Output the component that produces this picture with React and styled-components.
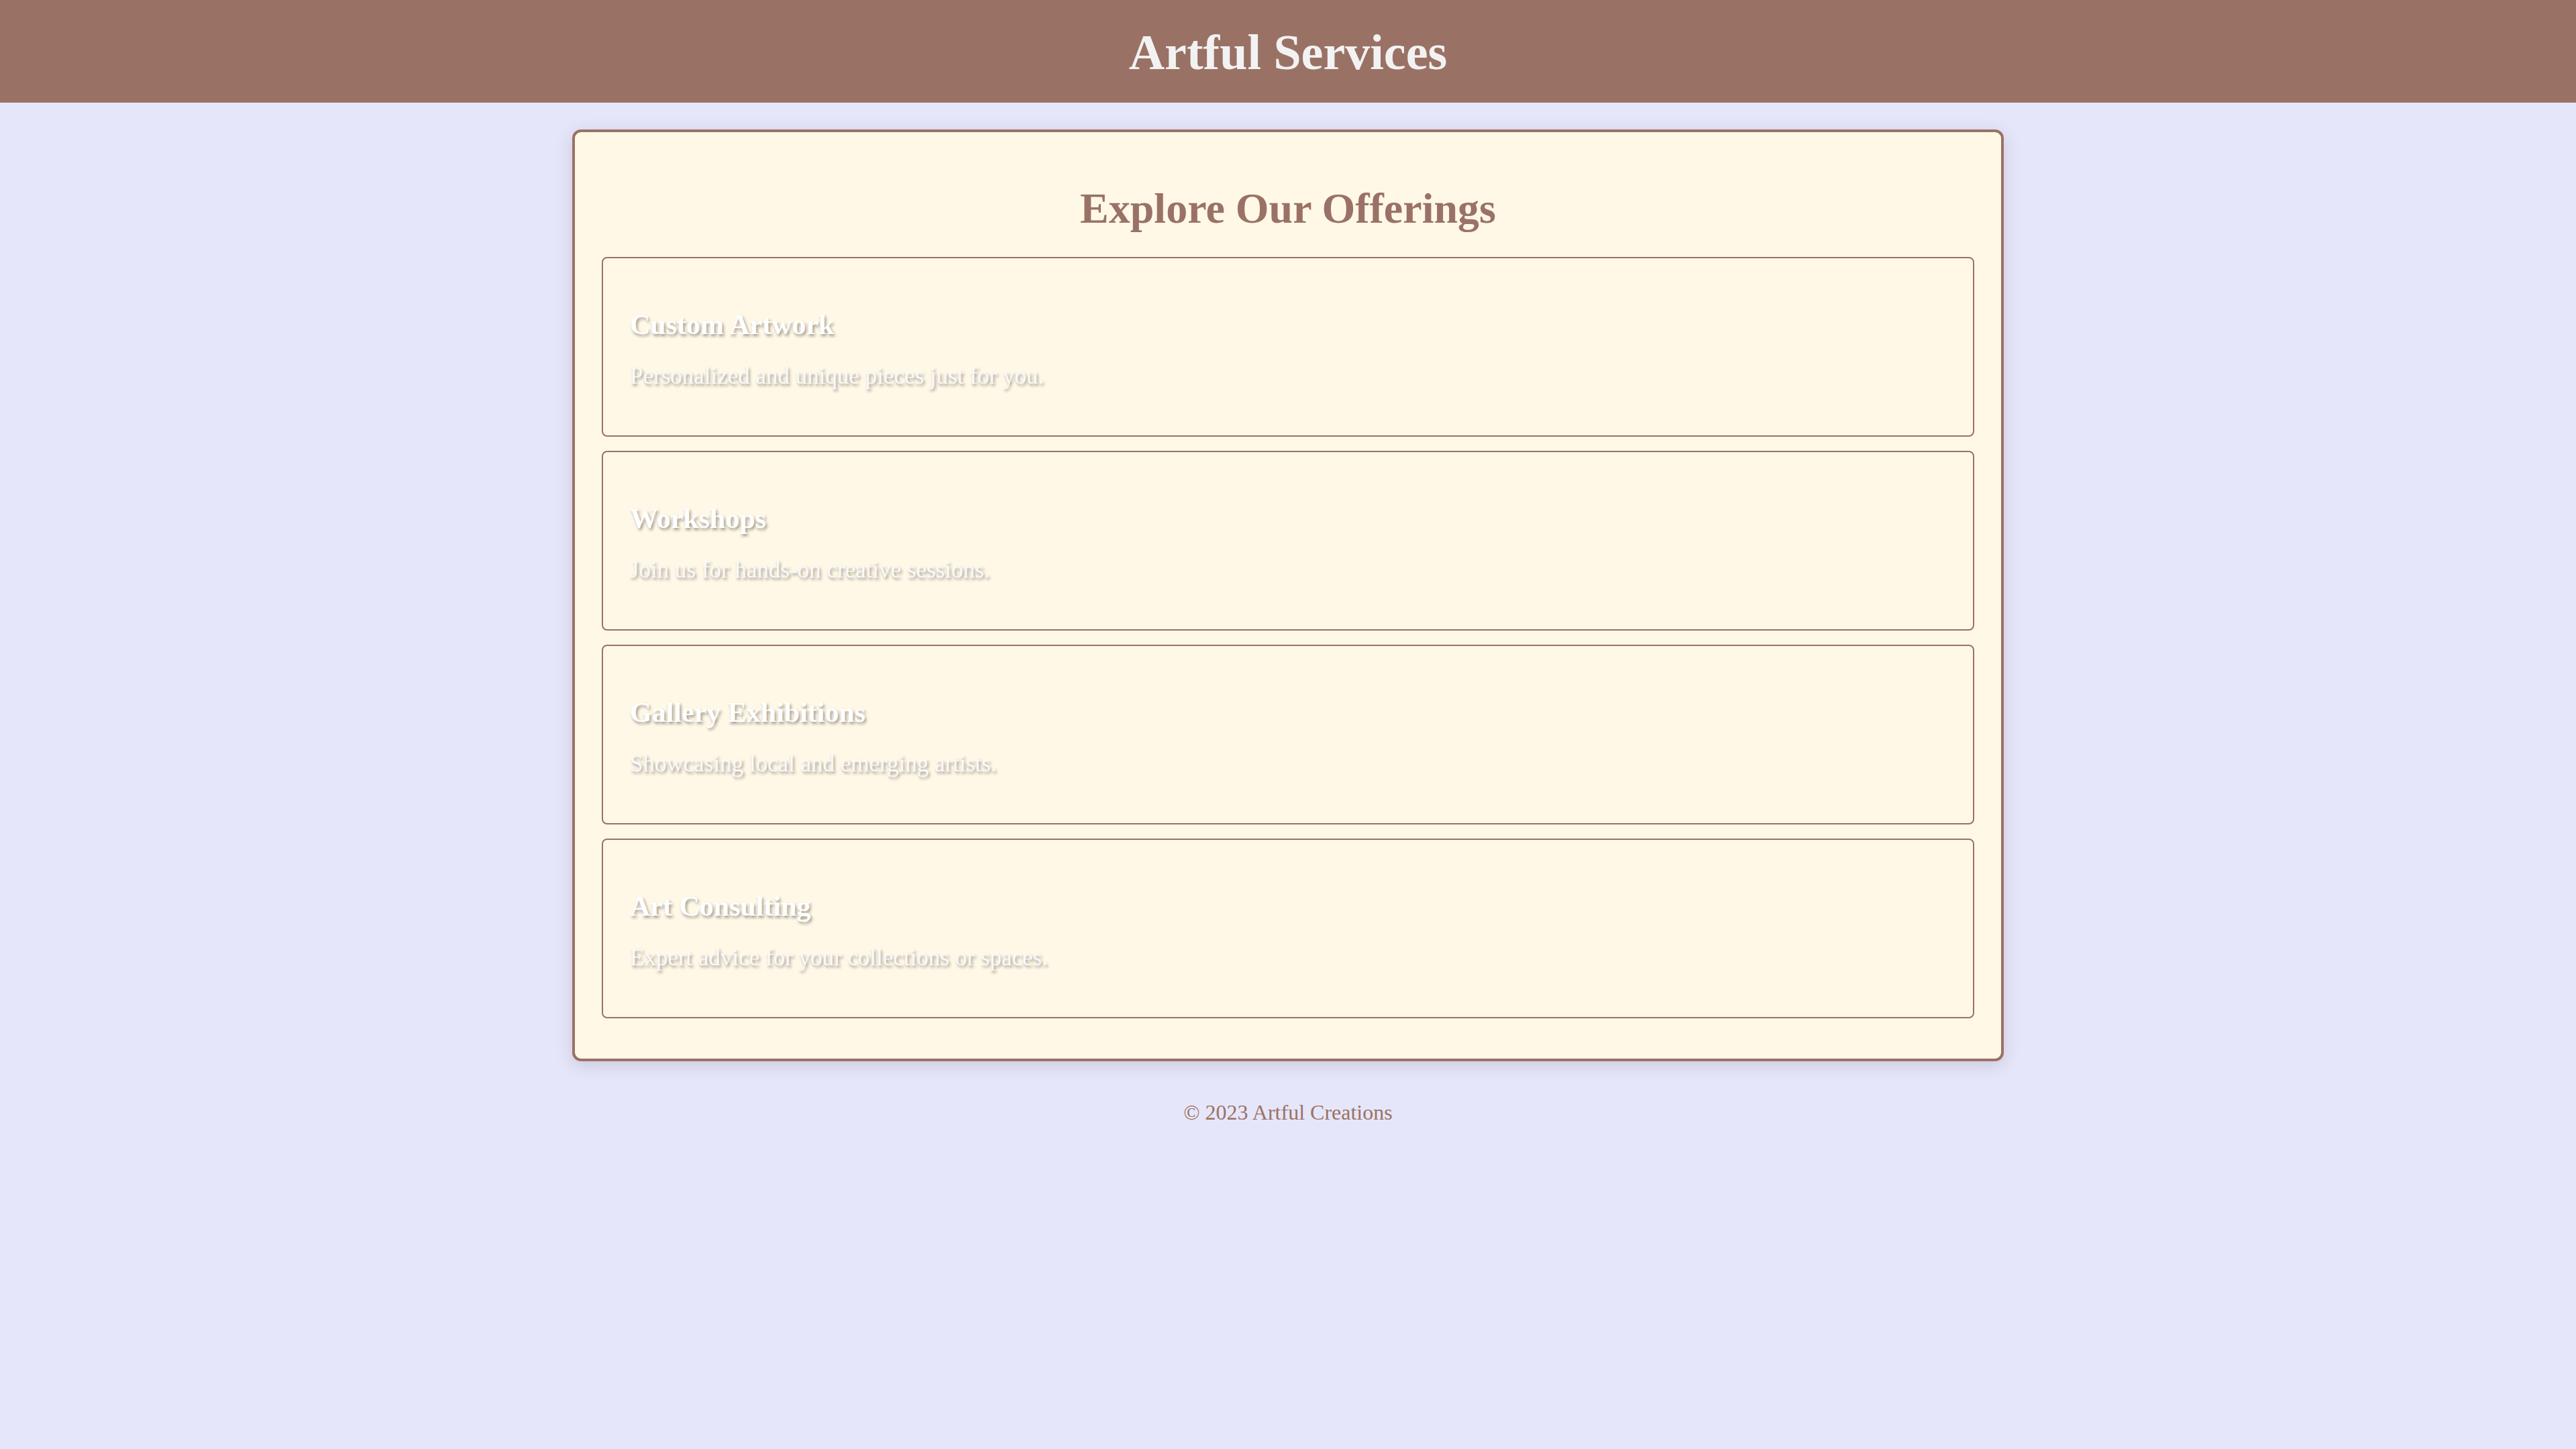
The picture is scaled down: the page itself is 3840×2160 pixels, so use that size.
import React from 'react';
import styled, { createGlobalStyle } from 'styled-components';

const services = [
  { title: 'Custom Artwork', text: 'Personalized and unique pieces just for you.' },
  { title: 'Workshops', text: 'Join us for hands-on creative sessions.' },
  { title: 'Gallery Exhibitions', text: 'Showcasing local and emerging artists.' },
  { title: 'Art Consulting', text: 'Expert advice for your collections or spaces.' },
];

const GlobalStyle = createGlobalStyle`
  html, body {
    margin: 0;
    padding: 0;
    background: #e6e6fa;
    font-family: "Liberation Serif", "DejaVu Serif", serif;
  }
`;

const Page = styled.div`
  min-height: 100vh;
  display: flex;
  flex-direction: column;
  align-items: center;
`;

const Header = styled.header`
  width: 100%;
  height: 153px;
  background: #9a7265;
  display: flex;
  align-items: center;
  justify-content: center;
`;

const Title = styled.h1`
  margin: 0;
  padding-top: 4px;
  font-size: 74px;
  font-weight: bold;
  color: #f2f2f2;
`;

const Main = styled.main`
  width: 2134px;
  box-sizing: border-box;
  margin-top: 40px;
  padding: 40px 40px 60px;
  background: #fff8e7;
  border: 4px solid #9a7265;
  border-radius: 13px;
  box-shadow: 0 6px 24px rgba(80, 60, 90, 0.18);
`;

const Heading = styled.h2`
  margin: 37px 0 35px;
  font-size: 64px;
  line-height: 74px;
  text-align: center;
  color: #9a7265;
`;

const List = styled.div`
  display: flex;
  flex-direction: column;
  gap: 21px;
`;

const Item = styled.section`
  height: 268px;
  box-sizing: border-box;
  padding: 75px 40px 0;
  border: 2px solid #9a7265;
  border-radius: 8px;
  background: #fff8e7;
`;

const ItemTitle = styled.h3`
  margin: 0;
  font-size: 42px;
  line-height: 48px;
  font-weight: bold;
  color: #ffffff;
  text-shadow: 2px 3px 4px rgba(0, 0, 0, 0.4);
`;

const ItemText = styled.p`
  margin: 33px 0 0;
  font-size: 35px;
  line-height: 40px;
  color: #fafafa;
  text-shadow: 2px 3px 4px rgba(0, 0, 0, 0.4);
`;

const Footer = styled.footer`
  margin-top: 58px;
  font-size: 32px;
  line-height: 37px;
  color: #9a7265;
`;

export default function App() {
  return (
    <Page>
      <GlobalStyle />
      <Header>
        <Title>Artful Services</Title>
      </Header>
      <Main>
        <Heading>Explore Our Offerings</Heading>
        <List>
          {services.map((s) => (
            <Item key={s.title}>
              <ItemTitle>{s.title}</ItemTitle>
              <ItemText>{s.text}</ItemText>
            </Item>
          ))}
        </List>
      </Main>
      <Footer>© 2023 Artful Creations</Footer>
    </Page>
  );
}
